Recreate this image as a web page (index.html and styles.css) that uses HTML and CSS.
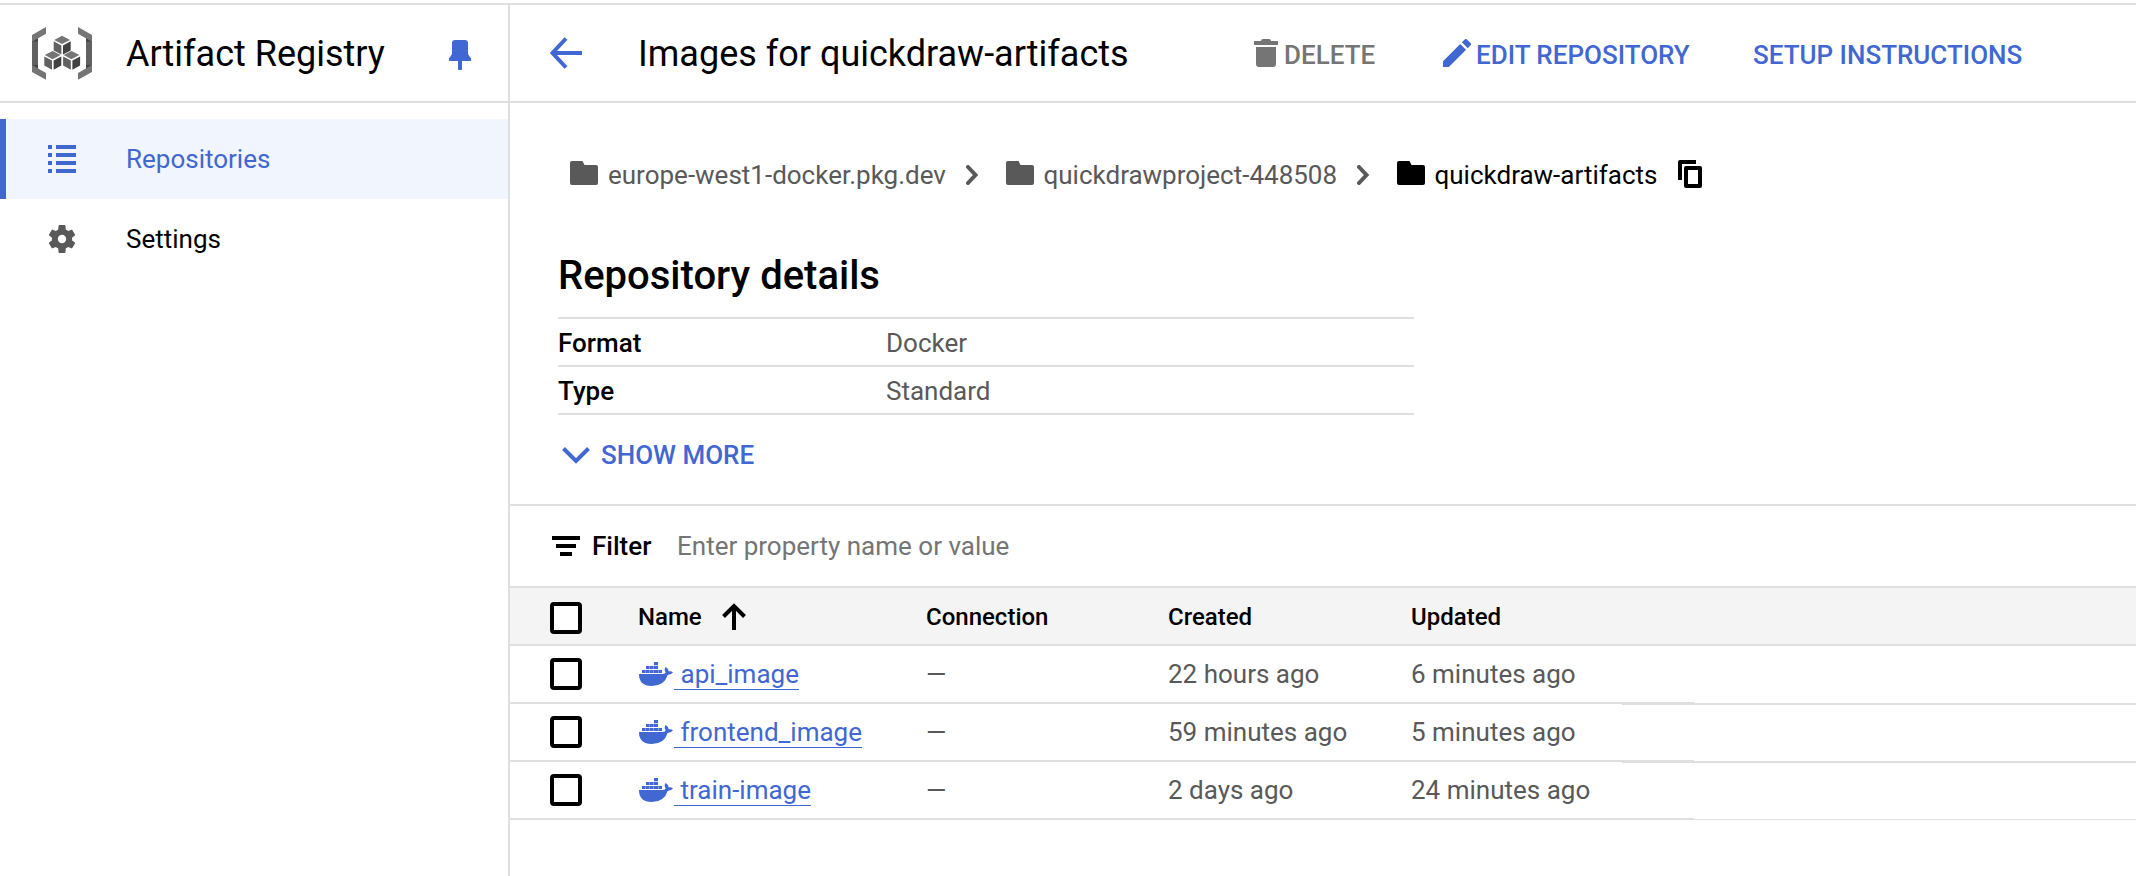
FILE: index.html
```html
<!DOCTYPE html>
<html lang="en">
<head>
<meta charset="utf-8">
<title>Artifact Registry</title>
<link rel="stylesheet" href="styles.css">
</head>
<body>
<svg width="0" height="0" class="defs">
  <symbol id="folder" viewBox="0 0 28 24"><path d="M2 0h10.500l2 4H26a2 2 0 0 1 2 2v16a2 2 0 0 1-2 2H2a2 2 0 0 1-2-2V2a2 2 0 0 1 2-2z"/></symbol>
  <symbol id="chevron" viewBox="0 0 14 20"><path d="M2 2L9.500 10L2 18" fill="none" stroke="currentColor" stroke-width="4" stroke-linecap="round"/></symbol>
  <symbol id="docker" viewBox="0 0 102 72">
    <path d="M45 0h12v10H45zM21 12h11v9H21zM33 12h11v9H33zM45 12h12v9H45zM9 24h11v9H9zM21 24h11v9H21zM33 24h11v9H33zM45 24h12v9H45zM58 24h11v9H58z"/>
    <path d="M0 36H72Q79 36 80 31Q74 23 80 15Q88 19 89 28Q96 26 102 31Q97 39 86 39Q76 72 38 72Q0 72 0 36z"/>
  </symbol>
</svg>
<div class="app">
  <aside class="sidebar">
    <div class="product">
      <svg class="logo" viewBox="32 27 60 53">
        <g id="bracket">
          <path fill="#616161" d="M32 38h6v31h-6z"/>
          <path fill="#424242" d="M32 41.500l6-3.200v3.200zM32 65.200l6 3v-3.200z"/>
          <path fill="#757575" d="M46 27v6.800L32 41.700V35zM46 79.700v-6.800L32 65v6.900z"/>
        </g>
        <use href="#bracket" transform="translate(124 0) scale(-1 1)"/>
        <g id="cube">
          <path fill="#757575" d="M62 35.700l8 4.200-8 4.200-7.800-4.200z"/>
          <path fill="#616161" d="M53.700 41.300l7.700 4.100v9.200l-7.700-4.200z"/>
          <path fill="#424242" d="M63 45.400l7.700-4.100v9.100L63 54.600z"/>
        </g>
        <use href="#cube" transform="translate(-9.400 15.200)"/>
        <use href="#cube" transform="translate(9.400 15.200)"/>
      </svg>
      <span class="product-name">Artifact Registry</span>
      <svg class="pin" viewBox="0 0 22 30"><path d="M6 0h10a3 3 0 0 1 3 3v11l3 4.500V21H13v7.500a2 2 0 0 1-4 0V21H0v-2.500L3 14V3a3 3 0 0 1 3-3z"/></svg>
    </div>
    <nav class="nav">
      <a class="nav-item active">
        <svg class="nav-icon" viewBox="0 0 28 28"><path d="M0 0h4v4H0zM8 0h20v4H8zM0 8h4v4H0zM8 8h20v4H8zM0 16h4v4H0zM8 16h20v4H8zM0 24h4v4H0zM8 24h20v4H8z"/></svg>
        <span>Repositories</span>
      </a>
      <a class="nav-item">
        <svg class="nav-icon gear" viewBox="2.200 2 19.600 20"><path d="M19.140 12.940c.04-.3.06-.61.06-.94 0-.32-.02-.64-.07-.94l2.030-1.580c.18-.14.23-.41.12-.61l-1.920-3.320c-.12-.22-.37-.29-.59-.22l-2.390.96c-.5-.38-1.030-.7-1.620-.94l-.36-2.940c-.04-.24-.24-.41-.48-.41h-3.840c-.24 0-.43.17-.47.41l-.36 2.940c-.59.24-1.130.57-1.620.94l-2.390-.96c-.22-.08-.47 0-.59.22L2.740 8.870c-.12.21-.08.47.12.61l2.030 1.580c-.05.3-.09.63-.09.94s.02.640.07.94l-2.030 1.580c-.18.14-.23.41-.12.61l1.920 3.320c.12.22.37.29.59.22l2.390-.96c.5.38 1.030.7 1.620.94l.36 2.940c.05.24.24.41.48.41h3.840c.24 0 .44-.17.47-.41l.36-2.940c.59-.24 1.130-.56 1.620-.94l2.390.96c.22.08.47 0 .59-.22l1.920-3.320c.12-.22.07-.47-.12-.61l-2.010-1.580zM12 15a3 3 0 1 1 0-6 3 3 0 0 1 0 6z"/></svg>
        <span>Settings</span>
      </a>
    </nav>
  </aside>
  <main class="main">
    <header class="topbar">
      <svg class="back" viewBox="0 0 32 32"><path d="M16 1.500L2.500 16L16 30.500M2.500 16H32" fill="none" stroke="currentColor" stroke-width="4"/></svg>
      <h1 class="title">Images for quickdraw-artifacts</h1>
      <div class="action delete"><svg width="24" height="28" viewBox="0 0 24 28"><path d="M9 0h6a2 2 0 0 1 2 2h7v4H0V2h7a2 2 0 0 1 2-2zM2 8h20v17a3 3 0 0 1-3 3H5a3 3 0 0 1-3-3z"/></svg><span>DELETE</span></div>
      <div class="action edit"><svg width="28" height="28" viewBox="3 3 18 18"><path d="M3 17.250V21h3.750L17.810 9.940l-3.750-3.750zM20.710 7.040a1 1 0 0 0 0-1.410l-2.340-2.340a1 1 0 0 0-1.410 0l-1.830 1.830 3.750 3.750z"/></svg><span>EDIT REPOSITORY</span></div>
      <div class="action setup"><span>SETUP INSTRUCTIONS</span></div>
    </header>
    <div class="crumbs">
      <svg class="folder"><use href="#folder"/></svg><span class="c1">europe-west1-docker.pkg.dev</span>
      <svg class="chev"><use href="#chevron"/></svg>
      <svg class="folder"><use href="#folder"/></svg><span class="c2">quickdrawproject-448508</span>
      <svg class="chev"><use href="#chevron"/></svg>
      <svg class="folder current"><use href="#folder"/></svg><span class="c3 current">quickdraw-artifacts</span>
      <svg class="copy current" viewBox="0 0 24 28"><path d="M2 20V2h16" fill="none" stroke="currentColor" stroke-width="4" stroke-linejoin="round"/><path d="M8 8h14v18H8z" fill="none" stroke="currentColor" stroke-width="4" stroke-linejoin="round"/></svg>
    </div>
    <section class="details">
      <h2>Repository details</h2>
      <dl>
        <div class="pair"><dt>Format</dt><dd>Docker</dd></div>
        <div class="pair"><dt>Type</dt><dd>Standard</dd></div>
      </dl>
      <div class="more"><svg viewBox="0 0 28 17"><path d="M1.500 1.500L14 14L26.500 1.500" fill="none" stroke="currentColor" stroke-width="4"/></svg><span>SHOW MORE</span></div>
    </section>
    <div class="filter">
      <svg viewBox="0 0 28 20"><path d="M0 0h28v4H0zM4 8h20v4H4zM8 16h12v4H8z"/></svg>
      <b>Filter</b><span>Enter property name or value</span>
    </div>
    <div class="table">
      <div class="thead"><i class="box"></i><span class="sort">Name<svg viewBox="0 0 24 27"><path d="M12 27V3M1.500 13.500L12 3L22.500 13.500" fill="none" stroke="currentColor" stroke-width="4"/></svg></span><span>Connection</span><span>Created</span><span>Updated</span></div>
      <div class="row"><i class="box"></i><span class="name"><svg><use href="#docker"/></svg><a>api_image</a></span><span>—</span><span>22 hours ago</span><span>6 minutes ago</span></div>
      <div class="row"><i class="box"></i><span class="name"><svg><use href="#docker"/></svg><a>frontend_image</a></span><span>—</span><span>59 minutes ago</span><span>5 minutes ago</span></div>
      <div class="row"><i class="box"></i><span class="name"><svg><use href="#docker"/></svg><a>train-image</a></span><span>—</span><span>2 days ago</span><span>24 minutes ago</span></div>
    </div>
  </main>
</div>
</body>
</html>
```
FILE: styles.css
```css
* { box-sizing: border-box; }
body {
  margin: 0;
  width: 2136px;
  height: 876px;
  overflow: hidden;
  background: #fff;
  color: #000;
  font-family: Roboto, "Liberation Sans", sans-serif;
  font-size: 26px;
  line-height: 32px;
}
svg { display: block; flex: none; fill: currentColor; }
.defs { position: absolute; }
h1, h2, dl, dd { margin: 0; font-weight: 400; }
.app {
  display: flex;
  height: 873px;
  margin-top: 3px;
  border-top: 2px solid #dfdfdf;
}
.sidebar { width: 510px; flex: none; border-right: 2px solid #dfdfdf; }
.product {
  display: flex;
  align-items: center;
  height: 98px;
  padding: 0 37px 0 32px;
  border-bottom: 2px solid #dfdfdf;
}
.logo { width: 60px; height: 53px; margin-top: 1px; }
.product-name { margin-left: 34px; padding-top: 2px; font-size: 36px; line-height: 44px; }
.pin { width: 22px; height: 30px; margin-left: auto; margin-top: 4px; color: #4167d2; }
.nav { padding-top: 16px; }
.nav-item {
  display: flex;
  align-items: center;
  gap: 50px;
  height: 80px;
  padding-left: 48px;
}
.nav-item.active {
  padding-left: 42px;
  border-left: 6px solid #4167d2;
  background: #f0f5fe;
  color: #4167d2;
}
.nav-icon { width: 28px; height: 28px; }
.gear { color: #595959; }

.main { flex: 1; min-width: 0; }
.topbar {
  display: flex;
  align-items: center;
  height: 98px;
  padding-left: 40px;
  border-bottom: 2px solid #dfdfdf;
}
.back { width: 32px; height: 32px; color: #4167d2; }
.title { width: 616px; margin-left: 56px; padding-top: 2px; font-size: 36px; line-height: 44px; }
.action { display: flex; align-items: center; height: 36px; color: #4167d2; font-weight: 500; white-space: nowrap; }
.action span { padding-top: 4px; }
.delete { width: 189px; gap: 6px; color: #757575; }
.edit { width: 310px; gap: 5px; }

.crumbs {
  display: flex;
  align-items: center;
  height: 144px;
  padding-left: 60px;
  color: #595959;
}
.folder { width: 28px; height: 24px; margin: 0 10px 4px 0; }
.chev { width: 14px; height: 20px; }
.c1 { width: 358px; }
.chev + .folder { margin-left: 26px; margin-right: 9.5px; }
.c2 { width: 313.5px; }
.c3 { width: 243.500px; }
.current { color: #000; }
.copy { width: 24px; height: 28px; margin-bottom: 2px; }

.details { height: 257px; padding: 6px 0 0 48px; }
.details h2 { font-size: 40px; line-height: 46px; font-weight: 500; }
.details dl { width: 856px; margin-top: 18px; border-top: 2px solid #dfdfdf; }
.pair { display: flex; height: 48px; padding-top: 2px; align-items: center; border-bottom: 2px solid #dfdfdf; }
.pair dt { width: 328px; font-weight: 500; }
.pair dd { color: #595959; }
.more { display: flex; align-items: center; gap: 11px; margin: 24px 0 0 4px; color: #4167d2; font-weight: 500; }
.more svg { width: 28px; height: 17px; }

.filter {
  display: flex;
  align-items: center;
  height: 82px;
  padding-left: 42px;
  border-top: 2px solid #dfdfdf;
}
.filter svg { width: 28px; height: 20px; }
.filter b { width: 85px; margin-left: 12px; font-weight: 500; }
.filter span { color: #757575; }

.thead, .row {
  display: grid;
  grid-template-columns: 88px 288px 242px 243px auto;
  align-items: center;
  height: 58px;
  padding-left: 40px;
  border-bottom: 2px solid #dfdfdf;
}
.thead {
  height: 60px;
  padding-top: 2px;
  border-top: 2px solid #dfdfdf;
  background: #f4f4f4;
  font-size: 24px;
  font-weight: 500;
}
.thead .box { margin-top: 2px; }
.sort { display: flex; align-items: center; gap: 20px; }
.sort svg { width: 24px; height: 27px; margin-bottom: 1px; }
.box { width: 32px; height: 32px; border: 4px solid #000; border-radius: 4px; background: #fff; }
.row { position: relative; width: 1184px; color: #595959; }
.row::after {
  content: "";
  position: absolute;
  left: 1112px;
  top: 57px;
  width: 514px;
  height: 2px;
  background: #dfdfdf;
}
.row:last-child::after { left: 1184px; width: 442px; height: 1px; }
.name { display: flex; align-items: center; }
.name svg { width: 34px; height: 24px; margin-left: 1px; color: #4167d2; }
.name a { height: 32px; margin-left: 1px; padding-left: 6.5px; color: #4167d2; border-bottom: 1px solid #4167d2; }
```
